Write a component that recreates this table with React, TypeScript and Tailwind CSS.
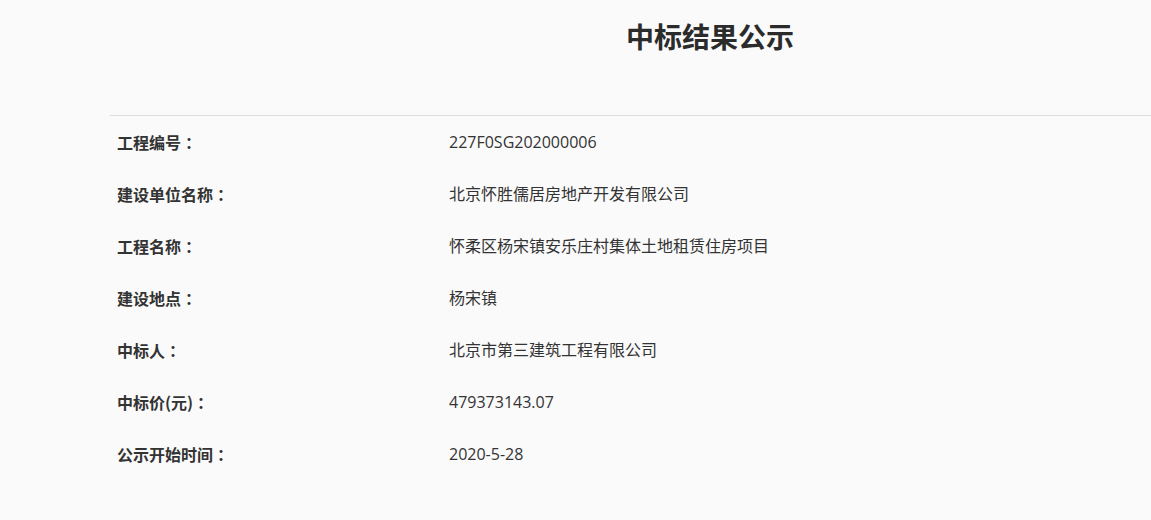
import React from "react";

const rows: [string, string][] = [
  ["工程编号", "227F0SG202000006"],
  ["建设单位名称", "北京怀胜儒居房地产开发有限公司"],
  ["工程名称", "怀柔区杨宋镇安乐庄村集体土地租赁住房项目"],
  ["建设地点", "杨宋镇"],
  ["中标人", "北京市第三建筑工程有限公司"],
  ["中标价(元)", "479373143.07"],
  ["公示开始时间", "2020-5-28"],
];

export default function App() {
  return (
    <div
      className="w-[1151px] h-[520px] overflow-hidden bg-[#fafafa] text-[#333333]"
      style={{ fontFamily: '"Noto Sans CJK SC", "Noto Sans", sans-serif' }}
    >
      <div className="ml-[110px] w-[1200px]">
        <div className="h-[116px] border-b border-[#dddddd] pt-[16px]">
          <h1 className="text-center text-[28px] leading-[40px] font-bold text-[#2b2b2b]">
            中标结果公示
          </h1>
        </div>
        <div>
          {rows.map(([k, v]) => (
            <div key={k} className="flex h-[52px] items-center">
              <div className="w-[339px] pl-[7px] text-[16px] font-bold">
                {k}
                <span className="font-['Noto_Sans_CJK_JP',sans-serif]">：</span>
              </div>
              <div className="text-[16px] font-['Open_Sans','Noto_Sans_CJK_SC',sans-serif]">{v}</div>
            </div>
          ))}
        </div>
      </div>
    </div>
  );
}
